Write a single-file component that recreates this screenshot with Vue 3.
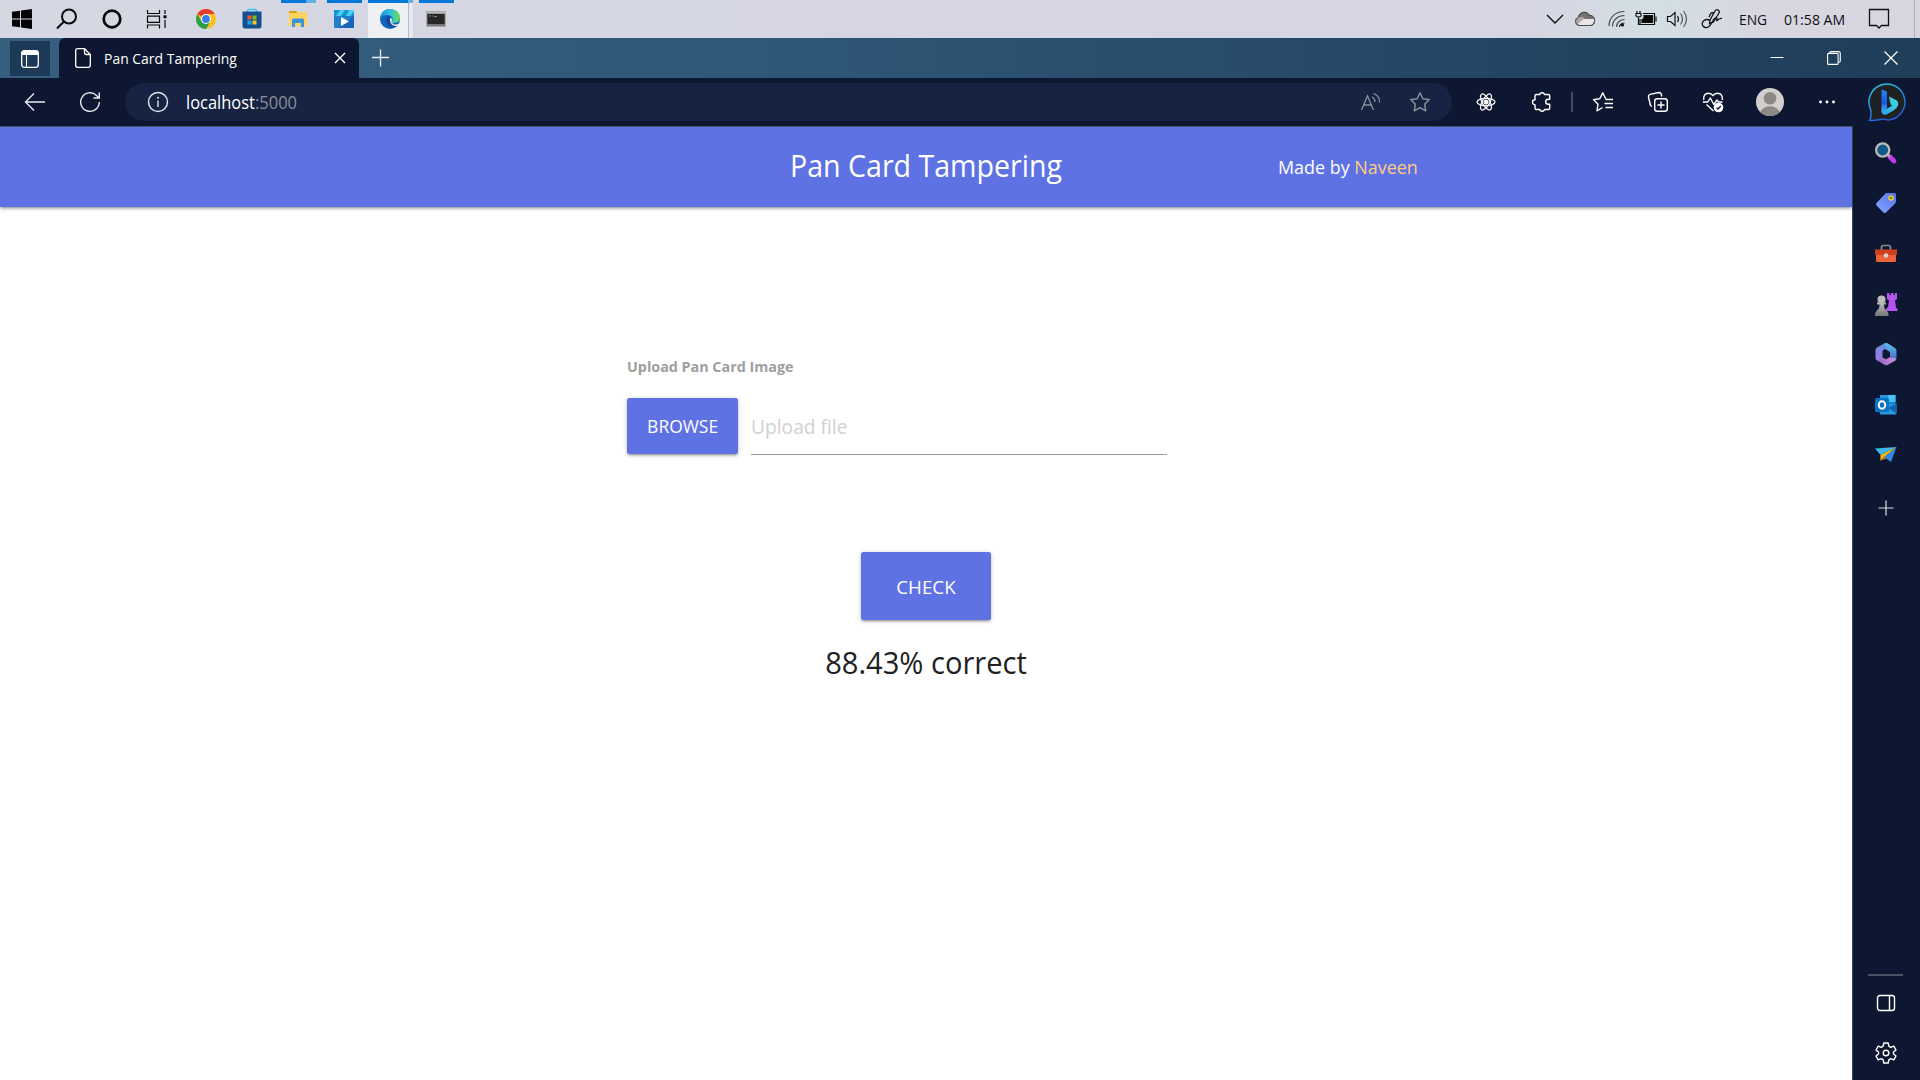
<script setup>
const title = 'Pan Card Tampering'
const author = 'Naveen'
const score = '88.43% correct'
</script>

<template>
  <div class="screen">
    <div class="taskbar">
      <div class="system">
        <span class="slot"><svg width="22" height="22" viewBox="0 0 22 22"><path d="M1 3.800 9 2.700V10.500H1zM10 2.500 21 1V10.500H10zM1 11.500H9V19.300L1 18.200zM10 11.500H21V21L10 19.500z" fill="#050505"/></svg></span>
        <span class="slot"><svg width="22" height="22" viewBox="0 0 22 22" fill="none" stroke="#0a0a0a" stroke-width="2"><circle cx="13" cy="8.500" r="7"/><path d="M8 13.500 1 20.500"/></svg></span>
        <span class="slot"><svg width="22" height="22" viewBox="0 0 22 22"><circle cx="11" cy="11" r="8.300" fill="none" stroke="#0a0a0a" stroke-width="2.700"/></svg></span>
        <span class="slot"><svg width="22" height="22" viewBox="0 0 22 22" fill="none" stroke="#0a0a0a" stroke-width="1.200"><path d="M1.500 2V5.500H13.500V2M1.500 20.500V17H13.500V20.500M1.500 8.200H13.500V14.300H1.500zM19 2V6M19 12V20"/><path d="M17.500 7.300h3v3h-3z" fill="#0a0a0a" stroke="none"/></svg></span>
      </div>
      <div class="apps">
        <span class="app"><svg width="22" height="22" viewBox="0 0 22 22"><circle cx="11" cy="11" r="10" fill="#fbc116"/><path d="M11 11 2.340 6A10 10 0 0 1 19.660 6H11z" fill="#e33b2e"/><path d="M2.340 6A10 10 0 0 0 11 21L15.330 13.500 11 15.500 6.700 13.500z" fill="#2a9e4b"/><circle cx="11" cy="11" r="5" fill="#fff"/><circle cx="11" cy="11" r="3.900" fill="#3b7ded"/></svg></span>
        <span class="app"><svg width="22" height="22" viewBox="0 0 22 22"><path d="M6.500 5V3q0-1.500 1.500-1.500h6q1.500 0 1.500 1.500V5" fill="none" stroke="#35c4f2" stroke-width="1.500"/><path d="M1.500 3.500h19V18q0 2.500-2.500 2.500H4Q1.500 20.500 1.500 18z" fill="#164f8e"/><path d="M6.500 7.500h4v4h-4z" fill="#f15a25"/><path d="M11.500 7.500h4v4h-4z" fill="#80bd18"/><path d="M6.500 12.500h4v4h-4z" fill="#16a8ef"/><path d="M11.500 12.500h4v4h-4z" fill="#ffc414"/></svg></span>
        <span class="app running grouped"><svg width="22" height="22" viewBox="0 0 22 22"><path d="M2 3h7l2 2v3H2z" fill="#dfa00b"/><path d="M2 5h7l2-1h9v14H2z" fill="#fed45c"/><path d="M5 19v-7q0-1.500 1.500-1.500h9Q17 10.500 17 12v7h-3v-4H8v4z" fill="#3b94dc"/></svg></span>
        <span class="app running"><svg width="22" height="22" viewBox="0 0 22 22"><path d="M1 2h20v18H3q-2 0-2-2z" fill="#1765b9"/><path d="M1 2h20v6H1z" fill="#1594d5"/><path d="M7 2h5L8 8H3zM16 2h5v2l-4 4h-4z" fill="#46d0ed"/><path d="M1 8h20L5 20H3q-2 0-2-2z" fill="#217fca"/><path d="M8 9v9l8-4.500z" fill="#fff"/></svg></span>
        <span class="app running active grouped"><svg width="22" height="22" viewBox="0 0 22 22"><defs><linearGradient id="edgeTop" x1="0" y1="0.500" x2="1" y2="0.500"><stop offset="0" stop-color="#168ddd"/><stop offset=".5" stop-color="#2fc2dc"/><stop offset="1" stop-color="#6bdc55"/></linearGradient></defs><circle cx="11" cy="11" r="10" fill="#0f65bd"/><path d="M1 10C2 4 6 1 11 1c6 0 10 4 10 8.500 0 4-3 5.500-6 5.500-2 0-3-1-2-2 2-3-1-6-5-6-3 0-5.500 1-7 3z" fill="url(#edgeTop)"/><path d="M8 9c-2 4 0 9 5 10 2 .3 4 0 6-1.500-5 1-9-3-8-7.500-1-1.700-2-1.700-3-1z" fill="#124a93"/><path d="M11 10c-.8 4 2 6.500 5 6.500 2 0 3.500-.5 4.800-1.500l1.200 1-2 3q-.7-1-1.700-1.300c-5 1.300-8.300-2.700-7.300-7.700z" fill="#f0f1f5"/><path d="M11 10q2 0 2 1.500 0 1-.5 1.800 0 1.500 2 2l-1 .5Q10.500 13.500 11 10z" fill="#f4f6fb"/></svg></span>
        <span class="app running"><svg width="22" height="22" viewBox="0 0 22 22"><path d="M1.500 3.500h19v15h-19z" fill="#777" stroke="#aaa"/><path d="M2.500 6h17v10h-17z" fill="#272727"/><path d="M2 4h18v1.500H2z" fill="#bbb"/><path d="M4 8h2M7 8h1M9 8.500h3" stroke="#888"/></svg></span>
      </div>
      <div class="tray">
        <svg class="t-chev" width="18" height="18" viewBox="0 0 18 18" fill="none" stroke="#111" stroke-width="1.400"><path d="m1 5 8 8 8-8"/></svg>
        <svg class="t-cloud" width="22" height="18" viewBox="0 0 22 18"><path d="M5 15.500a4.300 4.300 0 0 1-.5-8.300C5.500 1 13.500 1 15.500 5.500c4 0 5.500 3 5 6-.4 2.500-2 4-4 4z" fill="#e7e7e5" stroke="#4a4947"/><path d="M4.500 7.200C5.500 1 13.500 1 15.500 5.500c2 0 4 1 4.800 3.500L11 9z" fill="#73716f"/><path d="m11 8-8 6.500C-.5 12 1 7.500 4.500 7.200c2-.5 4.500-.2 6.500.8z" fill="#aaa9a7"/><path d="M5 15.500a4.300 4.300 0 0 1-.5-8.300C5.500 1 13.500 1 15.500 5.500c4 0 5.500 3 5 6-.4 2.500-2 4-4 4z" fill="none" stroke="#4a4947"/></svg>
        <svg class="t-wifi" width="18" height="18" viewBox="0 0 18 18" fill="none" stroke="#4b4b50" stroke-width="1.200"><path d="M1 16C1 7 8 1.500 16.500 1.500M4.500 16.500C4.500 10 10 5.500 16.500 5.500M8.500 17c0-4.500 4-7.500 8-7.500"/><path d="M11.500 17c0-2 2-4 5-4" stroke="#222"/><circle cx="14.500" cy="15" r="1.600" fill="#111" stroke="none"/></svg>
        <svg class="t-batt" width="22" height="18" viewBox="0 0 22 18" fill="none" stroke="#111" stroke-width="1.200"><path d="M8 3.500h11.500v11H5V9"/><path d="M9 5.500h8.500v7H7V9.500l2-1z" fill="#050505"/><path d="M21 6.500v5M3.500 7.500v7H5M2 1v2M5 1v2M1 3.500h5V6q-2.500 2-5 0z"/></svg>
        <svg class="t-vol" width="22" height="20" viewBox="0 0 22 20" fill="none" stroke="#111" stroke-width="1.200"><path d="M1.500 7.500h3L9 3.500v13L4.500 12.500h-3z"/><path d="M11.500 7q2 3 0 6"/><path d="M14.500 4.500q4 5.500 0 11M17.500 2q6 8 0 16" stroke="#555"/></svg>
        <svg class="t-pen" width="22" height="22" viewBox="0 0 22 22" fill="none" stroke="#111" stroke-width="1.300"><path d="M8.500 15.500 9 12l5-9q1-2 3-1 2 1 1 3l-5.500 9zM13 4.500l-3 .5-2 4"/><path d="M9 12.500q-3-2-6 0-3 2.500-1 5.500 2.500 3 6 .5 2-2 3.500-5 2-4 4-3.500 1 1 0 3 3-3 5.500-2.500"/></svg>
        <span class="t-lang">ENG</span>
        <span class="t-time">01:58 AM</span>
        <svg class="t-note" width="22" height="22" viewBox="0 0 22 22" fill="none" stroke="#111" stroke-width="1.300"><path d="M1.500 1.500h19V17.500H13.500L11 20 8.500 17.500H1.500z"/></svg>
        <i class="desktop-edge"></i>
      </div>
    </div>

    <div class="tabstrip">
      <div class="tab-menu"><svg width="20" height="20" viewBox="0 0 20 20"><rect x="1.700" y="1.700" width="16.600" height="16.600" rx="2.500" fill="none" stroke="#fff" stroke-width="1.300"/><path d="M1.500 6V4q0-2.500 2.500-2.500h12q2.500 0 2.500 2.500v2z" fill="#fff"/><path d="M6.500 6v12" stroke="#fff" stroke-width="1.100"/></svg></div>
      <div class="tab">
        <svg width="18" height="22" viewBox="0 0 18 22" fill="none" stroke="#fff" stroke-width="1.300"><path d="M3.500 1.700h7l5.800 5.800V18q0 2.300-2.300 2.300H3.500Q1.700 20.300 1.700 18V3.500q0-1.800 1.800-1.800zM10.500 2v3.500q0 2 2 2h3.700"/></svg>
        <span class="tab-title">{{ title }}</span>
        <svg width="12" height="12" viewBox="0 0 12 12" stroke="#fff" stroke-width="1.400"><path d="m1 1 10 10M11 1 1 11"/></svg>
      </div>
      <svg class="new-tab" width="18" height="18" viewBox="0 0 18 18" stroke="#e8eef3" stroke-width="1.300"><path d="M8.500 .5v17M0 8.500h17"/></svg>
      <div class="controls">
        <svg width="14" height="14" viewBox="0 0 14 14" fill="none" stroke="#fff"><path d="M.5 6.500h13"/></svg>
        <svg width="14" height="14" viewBox="0 0 14 14" fill="none" stroke="#fff" stroke-width="1.100"><rect x=".6" y="2.400" width="10.500" height="11" rx="1"/><path d="M2.500 2.400Q2.500.6 4 .6h7.300q2 0 2 2V10q0 1.200-1.600 1.500"/></svg>
        <svg width="14" height="14" viewBox="0 0 14 14" fill="none" stroke="#fff" stroke-width="1.200"><path d="m.5.5 13 13M13.500.5l-13 13"/></svg>
      </div>
    </div>

    <div class="toolbar">
      <svg class="back" width="22" height="20" viewBox="0 0 22 20" fill="none" stroke="#e9ebf0" stroke-width="1.400"><path d="M21 10H1.500M10 1.500 1.500 10l8.500 8.500"/></svg>
      <svg class="reload" width="22" height="22" viewBox="0 0 22 22" fill="none" stroke="#e9ebf0" stroke-width="1.400"><path d="M20.300 11A9.300 9.300 0 1 1 17.500 4.400L20 7M20.300 1.500V7H14.500"/></svg>
      <div class="address">
        <svg width="22" height="22" viewBox="0 0 22 22" fill="none" stroke="#e3e6ed" stroke-width="1.400"><circle cx="11" cy="11" r="9.500"/><path d="M11 9.500V16"/><circle cx="11" cy="6.800" r="1" fill="#e3e6ed" stroke="none"/></svg>
        <span class="url">localhost<em>:5000</em></span>
        <svg class="read" width="22" height="20" viewBox="0 0 22 20" fill="none" stroke="#8b8f98" stroke-width="1.300"><path d="M1.500 18 7.500 4 13.500 18M3.700 13h7.600"/><path d="M12 5q3 1.500 3 5M13.500 1.500Q20 4 19.500 10.500"/></svg>
        <svg class="fav" width="22" height="22" viewBox="0 0 22 22" fill="none" stroke="#8f929a" stroke-width="1.400" stroke-linejoin="round"><path d="m11 1.700 2.900 6 6.400.9-4.600 4.600 1 6.600L11 16.700 5.300 19.800l1-6.600L1.700 8.600l6.400-.9z"/></svg>
      </div>
      <svg class="react" width="20" height="20" viewBox="0 0 20 20" fill="none" stroke="#f4f4f6" stroke-width="1.300"><ellipse cx="10" cy="10" rx="9" ry="3.700"/><ellipse cx="10" cy="10" rx="9" ry="3.700" transform="rotate(60 10 10)"/><ellipse cx="10" cy="10" rx="9" ry="3.700" transform="rotate(120 10 10)"/><circle cx="10" cy="10" r="1.900" fill="#fff"/></svg>
      <svg class="puzzle" width="22" height="22" viewBox="0 0 22 22" fill="none" stroke="#fff" stroke-width="1.400" stroke-linejoin="round"><path d="M4 5q0-1.500 1.500-1.500h3.200a2.500 2.500 0 0 1 4.800 0h3.700q1.500 0 1.500 1.500v3.300h-1.500a2.500 2.500 0 0 0 0 5h1.500V17q0 1.500-1.500 1.500h-3.700a2.500 2.500 0 0 1-4.800 0H5.500Q4 18.500 4 17v-3.300a2.500 2.500 0 0 1 0-5z"/></svg>
      <i class="divider"></i>
      <svg class="favs" width="22" height="22" viewBox="0 0 22 22" fill="none" stroke="#fff" stroke-width="1.400" stroke-linejoin="round"><path d="M10.500 16.500 5 19.800l1-6.600L1.500 8.600l6.300-.9 2.900-6 3 6M13.500 8.500H21M12.500 12.500H21M13.500 16.500H21"/></svg>
      <svg class="coll" width="22" height="22" viewBox="0 0 22 22" fill="none" stroke="#fff" stroke-width="1.400" stroke-linejoin="round"><rect x="7.700" y="7.700" width="12.600" height="12.600" rx="2.500"/><path d="M14 10.500v7M10.500 14h7M5 15.500 3.500 14.500 1.500 6q-.3-2 1.500-2.600L12 1.500q1.800 0 2.200 1.500l.5 2.500"/></svg>
      <svg class="heart" width="22" height="22" viewBox="0 0 22 22" fill="none" stroke="#fff" stroke-width="1.400" stroke-linejoin="round"><path d="M1.800 9C1 5 3 2.200 6.500 2.200c2 0 3.500 1 4.500 2.500 1-1.500 2.500-2.500 4.500-2.500C19 2.200 21 5 20.300 9M4.500 13.500l7 6.500M.8 11h5l2.500-4 3.500 6.500L15 9l1.500 2h4"/><circle cx="16.500" cy="16.500" r="4.800" fill="#fff" stroke="none"/><path d="m14.500 16.700 1.500 1.400 2.800-3" stroke="#0e1731"/></svg>
      <svg class="avatar" width="28" height="28" viewBox="0 0 28 28"><defs><clipPath id="face"><circle cx="14" cy="14" r="14"/></clipPath></defs><g clip-path="url(#face)"><path d="M0 0h28v28H0z" fill="#d2d0ce"/><circle cx="14" cy="10.300" r="6.300" fill="#8c8985"/><ellipse cx="14" cy="25.500" rx="9.800" ry="7.200" fill="#8c8985"/></g></svg>
      <svg class="dots" width="18" height="6" viewBox="0 0 18 6" fill="#fff"><circle cx="2.500" cy="3" r="1.400"/><circle cx="9" cy="3" r="1.400"/><circle cx="15.500" cy="3" r="1.400"/></svg>
      <svg class="bing" width="40" height="40" viewBox="0 0 40 40"><defs><linearGradient id="ring" x1="0" y1="0" x2=".5" y2="1"><stop offset="0" stop-color="#2ccff0"/><stop offset="1" stop-color="#235bd8"/></linearGradient><linearGradient id="bee" x1="0" y1="0" x2="0" y2="1"><stop offset="0" stop-color="#2389ee"/><stop offset=".6" stop-color="#1b55e6"/><stop offset="1" stop-color="#43c4f6"/></linearGradient><linearGradient id="beeTail" x1="1" y1="0" x2="0" y2="1"><stop offset="0" stop-color="#42e1d4"/><stop offset="1" stop-color="#2d9df5"/></linearGradient></defs><path d="M1.700 38.300Q3.500 35.500 2.800 28A18 18 0 1 1 20.500 38Q15 36.500 9 38 5 38.700 1.700 38.300z" fill="#202123" stroke="url(#ring)" stroke-width="1.500"/><path d="m13.500 7.500 5.500 2V26l-5.500 4z" fill="url(#bee)"/><path d="m21 14.500 7 3.500q3 2 2 5.500-1 3-4.500 5L19 32.300q-3 1.500-5-1-.5-1-.5-2L24 24l-1.500-2z" fill="url(#beeTail)"/></svg>
    </div>

    <div class="body">
      <main class="page">
        <header class="hero">
          <h1>{{ title }}</h1>
          <p>Made by <b>{{ author }}</b></p>
        </header>
        <form class="form" @submit.prevent>
          <label>Upload Pan Card Image</label>
          <div class="file-row">
            <div class="btn browse"><span>BROWSE</span></div>
            <div class="file-path"><span>Upload file</span></div>
          </div>
          <div class="submit"><div class="btn check"><span>CHECK</span></div></div>
          <h2>{{ score }}</h2>
        </form>
      </main>
      <aside class="side">
        <span><svg width="24" height="24" viewBox="0 0 24 24"><path d="m15.500 15.500 4.500 4.500" stroke="#c23de8" stroke-width="4.600" stroke-linecap="round"/><path d="m14 14 2 2" stroke="#aaa" stroke-width="2"/><circle cx="8.700" cy="9" r="6.600" fill="#12598a" stroke="#bcbab7" stroke-width="2.300"/></svg></span>
        <span><svg width="24" height="24" viewBox="0 0 24 24"><defs><linearGradient id="tag" x1="1" y1="0" x2="0" y2="1"><stop offset="0" stop-color="#5771ee"/><stop offset="1" stop-color="#84a9fb"/></linearGradient></defs><path d="M13 2h7.500Q22 2 22 3.500v7q0 1.200-1 2L12 21.500q-1.300 1-2.500 0l-7-7q-1-1.200 0-2.500L11 3q.8-1 2-1z" fill="url(#tag)"/><circle cx="17" cy="7" r="1.900" fill="#263" stroke="#f4c726" stroke-width="1.700"/></svg></span>
        <span><svg width="24" height="24" viewBox="0 0 24 24"><path d="M7.500 8V5.500q0-2 2-2h5q2 0 2 2V8" fill="none" stroke="#8b8b8d" stroke-width="1.700"/><path d="M2 12h20v6.500q0 1.500-1.500 1.500h-17Q2 20 2 18.500z" fill="#ed6338"/><path d="M1 7.500h22V12q0 1-1 1H2q-1 0-1-1z" fill="#cf401b"/><circle cx="12" cy="13.500" r="2.200" fill="#d8d6d2"/></svg></span>
        <span><svg width="24" height="24" viewBox="0 0 24 24"><defs><linearGradient id="pawn" x1="0" y1="0" x2="0" y2="1"><stop offset="0" stop-color="#bbb"/><stop offset="1" stop-color="#777"/></linearGradient></defs><path d="M13 1h2.500v2H17V1h2.500v2H21V1h2v6l-2 1.500 1 7 1.500 1.500v2H12v-2l2-2 1-6.500L13 7z" fill="#b456ee"/><circle cx="7.500" cy="7.500" r="4" fill="#bcbcbd"/><path d="M3 10.500h9v2H10q0 4.500 3 6.500l1.500 2.500V24H1v-2.500L2.500 19q3-2 3-6.500H3z" fill="url(#pawn)"/></svg></span>
        <span><svg width="24" height="24" viewBox="0 0 24 24"><defs><linearGradient id="mA" x1="1" y1="0" x2="0" y2="1"><stop offset="0" stop-color="#5a8fe6"/><stop offset="1" stop-color="#a77be0"/></linearGradient><linearGradient id="mB" x1="0" y1="0" x2="1" y2="0"><stop offset="0" stop-color="#8c62c4"/><stop offset="1" stop-color="#c993e0"/></linearGradient><linearGradient id="mC" x1="0" y1="0" x2="0" y2="1"><stop offset="0" stop-color="#5cc3ee"/><stop offset="1" stop-color="#4a67c8"/></linearGradient></defs><path d="M10.500 1.300q1.500-.8 3 0L21 6q1.500 1 1.500 2.500V16q0 1-.7 2L16 14.500V10L9.500 6z" fill="url(#mC)"/><path d="M11 1 3 5.500Q1.500 6.500 1.500 8v8q0 1.700 1.500 2.500l1 .5 4.500-2.500V9.500q0-1 1-1.600L13 6q-2.500-2.500-2-5z" fill="url(#mA)"/><path d="m3 18.500 5.500-3 3.500 1.800 4-2.300 6 1.500-.5 2-8 4.500q-1.500.6-2.500 0z" fill="url(#mB)"/></svg></span>
        <span><svg width="24" height="24" viewBox="0 0 24 24"><path d="M6 2h15.500v11H6z" fill="#1b7fd0"/><path d="M13.500 2h8v7h-8z" fill="#45c4f5"/><path d="M6 2h8v4H6z" fill="#2396df"/><path d="m5 13 17.500-2.500V20q0 1.500-1.500 1.500H6z" fill="#279bdf"/><path d="m14 15 8.500-4.500v10z" fill="#1565ad"/><rect x="1" y="5" width="14" height="14" rx="1.500" fill="#0872c5"/><ellipse cx="8" cy="12" rx="3.200" ry="3.700" fill="none" stroke="#fff" stroke-width="2"/></svg></span>
        <span><svg width="24" height="24" viewBox="0 0 24 24"><path d="M1 5.500 22.500 4 6.500 12z" fill="#39b9ed"/><path d="m22.500 4-5.500 15-7-5z" fill="#3286e5"/><path d="M22.500 4 6.500 12v6l3-3.500z" fill="#f7b81b"/><path d="m6.500 17.500 3.500-4 2.500 2z" fill="#cc7911"/></svg></span>
        <span class="add"><svg width="16" height="16" viewBox="0 0 16 16" stroke="#dcdfe6" stroke-width="1.200"><path d="M8 .5v15M.5 8h15"/></svg></span>
        <div class="side-foot">
          <i></i>
          <span><svg width="20" height="18" viewBox="0 0 20 18" fill="none" stroke="#fff" stroke-width="1.400"><rect x="1.500" y="1.500" width="17" height="15" rx="2.500"/><path d="M13.500 1.500v15"/></svg></span>
          <span><svg width="24" height="24" viewBox="0 0 24 24" fill="none" stroke="#fff" stroke-width="1.400" stroke-linejoin="round"><circle cx="12" cy="12" r="2.800"/><path d="M9.800 2h4.400l.6 3.200 1.900 1.100 3.100-1.100L22 9l-2.500 2v2l2.500 2-2.200 3.800-3.100-1.100-1.900 1.100-.6 3.200H9.800l-.6-3.200-1.900-1.100-3.100 1.100L2 15l2.500-2v-2L2 9l2.200-3.800 3.100 1.100 1.900-1.100z"/></svg></span>
        </div>
      </aside>
    </div>
  </div>
</template>

<style>
html, body { margin: 0; overflow: hidden; background: #fff; }
</style>

<style scoped>
* { box-sizing: border-box; }
svg { display: block; flex: none; }
.screen { width: 1920px; height: 1080px; display: flex; flex-direction: column; overflow: hidden; font-family: "Open Sans", "Noto Sans", sans-serif; }
span { white-space: nowrap; }

.taskbar { height: 38px; flex: none; display: flex; background: linear-gradient(90deg, #d5d7e3, #d6d6e2 80%, #d2dfe4 86%, #d8d6e1 92%, #d6d5e0); }
.system, .apps { display: flex; }
.slot { width: 45px; padding-right: 1px; display: flex; align-items: center; justify-content: center; }
.apps { margin-left: 3px; }
.app { width: 46px; padding-right: 1px; position: relative; display: flex; align-items: center; justify-content: center; }
.running::before { content: ""; position: absolute; top: 0; left: 6px; width: 35px; height: 3px; background: #0078d7; }
.grouped::before { background: linear-gradient(90deg, #0078d7 25px, #66aee8 25px); }
.active::before { left: 1px; width: 45px; background: linear-gradient(90deg, #0078d7 40px, #66aee8 40px); }
.active::after { content: ""; position: absolute; top: 3px; bottom: 0; left: 1px; width: 45px; background: linear-gradient(90deg, #eff0f4 40px, #b9bcc8 40px, #b9bcc8 41px, #e8e9ef 41px); }
.active svg { position: relative; z-index: 1; }
.tray { margin-left: auto; display: flex; align-items: center; color: #101014; font-size: 15px; }
.t-cloud { margin-left: 10px; }
.t-wifi { margin-left: 12px; }
.t-batt { margin-left: 9px; }
.t-vol { margin-left: 9px; }
.t-pen { margin-left: 13px; }
.t-lang { margin-left: 16px; width: 45px; transform: scaleX(.92); transform-origin: left; }
.t-time { width: 84px; transform: scaleX(.94); transform-origin: left; }
.desktop-edge { width: 1px; height: 38px; margin: 0 5px 0 24px; background: #aeb0ba; }

.tabstrip { height: 40px; flex: none; display: flex; align-items: center; background: linear-gradient(90deg, #376080, #2f5777 40%, #22425f 85%, #1f3e5a); }
.tab-menu { width: 40px; height: 35px; margin: 1px 9px 0 10px; display: flex; align-items: center; justify-content: center; background: #1c3958; }
.tab { width: 300px; height: 40px; padding: 0 13px 0 15px; display: flex; align-items: center; background: #0e1731; border-radius: 6px 6px 0 0; color: #fff; }
.tab-title { flex: 1; margin-left: 12px; padding-bottom: 1px; font-size: 15px; transform: scaleX(.93); transform-origin: left; }
.new-tab { margin-left: 13px; }
.controls { margin-left: auto; margin-right: 22px; display: flex; gap: 43px; }

.toolbar { height: 49px; flex: none; padding: 0 12px 1px 0; display: flex; align-items: center; background: #0e1731; }
.back { margin-left: 24px; }
.reload { margin-left: 33px; }
.address { width: 1327px; height: 38px; margin-left: 24px; padding: 0 21px 0 22px; border-radius: 19px; display: flex; align-items: center; background: #162342; }
.url { margin-left: 17px; font-size: 18px; color: #fff; transform: scaleX(.915); transform-origin: left; }
.url em { font-style: normal; color: #8b8f98; }
.read { margin-left: auto; }
.fav { margin-left: 27px; }
.react { margin-left: 24px; }
.puzzle { margin-left: 35px; }
.divider { width: 2px; height: 20px; margin-left: 18px; background: #444c60; }
.favs { margin-left: 19px; }
.coll { margin-left: 33px; }
.heart { margin-left: 33px; }
.avatar { margin-left: 32px; }
.dots { margin-left: 34px; }
.bing { margin-left: auto; }

.body { flex: 1; display: flex; min-height: 0; }
.page { flex: 1; background: #fff; position: relative; }
.page::before { content: ""; position: absolute; left: 0; right: 0; top: -1px; height: 1px; background: #4a5168; }
.hero { height: 80px; display: grid; grid-template-columns: 1fr 286px 1fr; align-items: center; background: #5e72e4; color: #fff; box-shadow: 0 2px 2px rgba(0,0,0,.14), 0 3px 1px -2px rgba(0,0,0,.12), 0 1px 5px rgba(0,0,0,.2); }
.hero h1 { grid-column: 2; margin: 0; display: flex; justify-content: center; white-space: nowrap; font-size: 31px; font-weight: 400; line-height: 77px; height: 80px; transform: scaleX(.922); }
.hero p { margin: 0 0 2px 209px; font-size: 18.750px; transform: scaleX(.955); transform-origin: left; }
.hero b { font-weight: 400; color: #ffcc80; }
.form { width: 598px; margin: 0 auto; padding-top: 148px; }
.form label { display: block; height: 22px; line-height: 22px; font-size: 15px; font-weight: 700; color: #9e9e9e; transform: scaleX(.955); transform-origin: left; }
.file-row { margin-top: 21px; display: flex; gap: 13px; }
.btn { display: flex; align-items: center; justify-content: center; background: #5e72e4; color: #fff; border-radius: 2.500px; box-shadow: 0 2px 2px rgba(0,0,0,.14), 0 3px 1px -2px rgba(0,0,0,.12), 0 1px 5px rgba(0,0,0,.2); }
.browse { width: 111px; height: 56px; font-size: 18px; }
.browse span { transform: scaleX(.97); }
.file-path { width: 416px; height: 57px; display: flex; align-items: center; border-bottom: 1px solid #9e9e9e; font-size: 20px; color: #d1d1d1; }
.file-path span { transform: scaleX(.96); transform-origin: left; }
.submit { display: flex; justify-content: center; margin-top: 97px; }
.check { width: 130px; height: 68px; font-size: 18.750px; }
.form h2 { margin: 20px 0 0; text-align: center; font-size: 31px; line-height: 44px; font-weight: 400; color: #212121; transform: scaleX(.938); }

.side { width: 68px; flex: none; padding: 1px 2px 0 0; display: flex; flex-direction: column; align-items: center; background: #0e1731; border-left: 1px solid #3b4660; }
.side > span { height: 50.300px; display: flex; align-items: center; }
.side .add { height: 56px; }
.side-foot { margin-top: auto; height: 106px; display: flex; flex-direction: column; align-items: center; }
.side-foot i { width: 35px; height: 2px; background: #4a5164; }
.side-foot span { height: 50px; display: flex; align-items: center; }
.side-foot i + span { margin-top: 2px; }
</style>
